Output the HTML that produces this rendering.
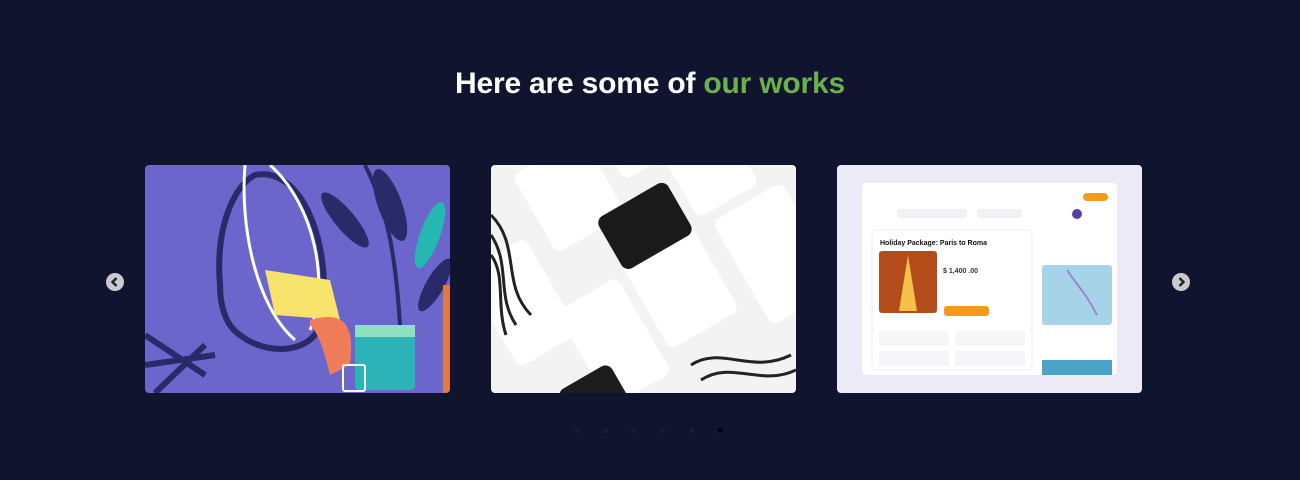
<!DOCTYPE html>
<html><head><meta charset="utf-8"><style>
html,body{margin:0;padding:0;width:1300px;height:480px;background:#11142f;overflow:hidden;font-family:"Liberation Sans",sans-serif}
h2{position:absolute;top:67px;left:0;width:1300px;text-align:center;margin:0;font-size:30px;font-weight:600;color:#fff;letter-spacing:-0.2px}
h2 span{color:#6ab04c}
.card{position:absolute;top:165px;width:305px;height:228px;border-radius:4px;overflow:hidden}
.arr{position:absolute;width:18px;height:18px;border-radius:50%;background:#c9c9cf;top:273px}
.arr svg{position:absolute;left:0;top:0}
.dot{position:absolute;top:428px;width:5px;height:5px;border-radius:50%;background:#1a1d3a}
</style></head><body>
<h2>Here are some of <span>our works</span></h2>

<div class="arr" style="left:106px"><svg width="18" height="18"><path d="M10.5 5 L6.5 9 L10.5 13" stroke="#222" stroke-width="2.4" fill="none"/></svg></div>
<div class="arr" style="left:1172px"><svg width="18" height="18"><path d="M7.5 5 L11.5 9 L7.5 13" stroke="#222" stroke-width="2.4" fill="none"/></svg></div>

<div class="card" style="left:145px;background:#6b65cc">
<svg width="305" height="228">
<path d="M220 0 C240 40 250 80 255 160" stroke="#2a2a6a" stroke-width="4" fill="none"/>
<ellipse cx="245" cy="40" rx="12" ry="38" fill="#2a2a6a" transform="rotate(-20 245 40)"/>
<ellipse cx="200" cy="55" rx="10" ry="35" fill="#2a2a6a" transform="rotate(-40 200 55)"/>
<ellipse cx="285" cy="70" rx="10" ry="35" fill="#24b8b0" transform="rotate(20 285 70)"/>
<ellipse cx="290" cy="120" rx="9" ry="30" fill="#2a2a6a" transform="rotate(30 290 120)"/>
<path d="M75 120 C70 60 90 20 110 10 C160 0 190 90 175 160 C165 190 120 190 95 170 C80 160 75 140 75 120Z" fill="none" stroke="#2a2a6a" stroke-width="6"/>
<path d="M100 0 C95 60 110 140 150 175" stroke="#fff" stroke-width="3" fill="none"/>
<path d="M125 0 C170 40 185 120 165 165" stroke="#fff" stroke-width="3" fill="none"/>
<path d="M120 105 L185 115 L195 155 L130 150Z" fill="#f7e26b"/>
<path d="M165 155 C200 145 210 160 205 200 L185 210 C180 190 175 170 165 160Z" fill="#f07c5a"/>
<rect x="210" y="160" width="60" height="65" rx="4" fill="#2bb3b8"/>
<rect x="210" y="160" width="60" height="12" fill="#8ee0c0"/>
<rect x="198" y="200" width="22" height="26" rx="2" fill="none" stroke="#fff" stroke-width="2"/>
<path d="M0 170 L60 210 M0 200 L70 190 M10 228 L60 180" stroke="#2a2a6a" stroke-width="6"/>
<rect x="298" y="120" width="7" height="108" fill="#e07840"/>
</svg></div>

<div class="card" style="left:491px;background:#f3f3f3">
<svg width="305" height="228">
<g transform="rotate(-30 150 114)">
<rect x="0" y="20" width="70" height="110" rx="8" fill="#fff"/>
<rect x="90" y="-40" width="80" height="90" rx="8" fill="#fff"/>
<rect x="140" y="40" width="80" height="150" rx="8" fill="#fff"/>
<rect x="140" y="40" width="80" height="60" rx="8" fill="#1a1a1a"/>
<rect x="60" y="100" width="70" height="110" rx="8" fill="#fff"/>
<rect x="240" y="100" width="80" height="120" rx="8" fill="#fff"/>
<rect x="185" y="-60" width="60" height="80" rx="8" fill="#fff"/>
<rect x="20" y="170" width="60" height="90" rx="8" fill="#1c1c1c"/>
<rect x="230" y="0" width="70" height="90" rx="8" fill="#fff"/>
</g>
<path d="M0 50 C30 80 10 120 40 150 M0 70 C20 100 5 130 25 160 M0 90 C15 110 5 140 15 170" stroke="#222" stroke-width="3" fill="none"/>
<path d="M200 200 C230 180 260 210 300 190 M210 215 C240 195 270 222 305 205" stroke="#222" stroke-width="3" fill="none"/>
</svg></div>

<div class="card" style="left:837px;background:#eceaf7">
<svg width="305" height="228">
<rect x="25" y="18" width="255" height="192" rx="4" fill="#fff"/>
<rect x="246" y="28" width="25" height="8" rx="4" fill="#f59a1b"/>
<rect x="60" y="44" width="70" height="9" rx="3" fill="#f2f2f6"/>
<rect x="140" y="44" width="45" height="9" rx="3" fill="#f2f2f6"/>
<circle cx="240" cy="49" r="5" fill="#5a3ea0"/>
<rect x="35" y="65" width="160" height="140" rx="4" fill="#fff" stroke="#eee"/>
<text x="43" y="80" font-size="7" font-weight="bold" fill="#111" font-family="Liberation Sans">Holiday Package: Paris to Roma</text>
<rect x="42" y="86" width="58" height="62" rx="3" fill="#b44c1a"/>
<path d="M71 90 L62 146 L80 146Z" fill="#f4c04a"/>
<text x="106" y="108" font-size="7" font-weight="bold" fill="#333" font-family="Liberation Sans">$ 1,400 .00</text>
<rect x="107" y="141" width="45" height="10" rx="3" fill="#f59a1b"/>
<rect x="42" y="166" width="70" height="15" rx="2" fill="#f6f6f8"/>
<rect x="118" y="166" width="70" height="15" rx="2" fill="#f6f6f8"/>
<rect x="42" y="186" width="70" height="15" rx="2" fill="#f6f6f8"/>
<rect x="118" y="186" width="70" height="15" rx="2" fill="#f6f6f8"/>
<rect x="205" y="100" width="70" height="60" rx="3" fill="#a7d3e8"/>
<path d="M230 105 C240 120 250 130 260 150" stroke="#9a86d8" stroke-width="2" fill="none"/>
<rect x="205" y="195" width="70" height="15" fill="#4ba3c7"/>
</svg></div>

<div class="dot" style="left:574px"></div>
<div class="dot" style="left:603px"></div>
<div class="dot" style="left:631px"></div>
<div class="dot" style="left:660px"></div>
<div class="dot" style="left:689px"></div>
<div class="dot" style="left:718px;background:#000"></div>
</body></html>
